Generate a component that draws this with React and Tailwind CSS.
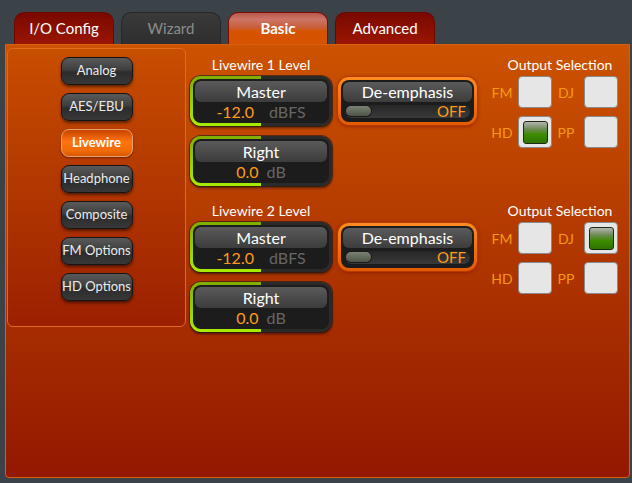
const sideItems = ["Analog", "AES/EBU", "Livewire", "Headphone", "Composite", "FM Options", "HD Options"];

function Tab({ label, kind }) {
  const styles = {
    red: "border-[#6a0800] bg-[linear-gradient(#7a0900,#9a1600)] text-white",
    gray: "border-[#262626] bg-[linear-gradient(#3a3a3a,#2e2e2e)] text-[#8c8c8c]",
    active:
      "border-[#7a0c00] bg-[linear-gradient(#b8584c,#cc7466_20%,#c8603e_45%,#d65400_60%,#d45200)] font-bold text-white",
  };
  return (
    <div
      className={`flex h-[32px] w-[100px] items-center justify-center rounded-t-[10px] border-x border-t text-[15px] ${styles[kind]}`}
    >
      {label}
    </div>
  );
}

function SideButton({ label }) {
  const active = label === "Livewire";
  return (
    <div
      className={
        active
          ? "flex h-[28px] w-[72px] items-center justify-center whitespace-nowrap rounded-[8px] border border-[#e8a070] bg-[linear-gradient(#c84400,#ff7410_45%,#f06a08_80%,#d85800)] text-[13px] font-bold text-white shadow-[0_1px_2px_rgba(0,0,0,0.4)]"
          : "flex h-[28px] w-[72px] items-center justify-center whitespace-nowrap rounded-[8px] border-[1.5px] border-[#151515] bg-[linear-gradient(#5a5a5a,#3e3e3e_45%,#2c2c2c_55%,#383838)] text-[13px] text-[#ececec] shadow-[0_2px_3px_rgba(0,0,0,0.5)]"
      }
    >
      {label}
    </div>
  );
}

function LevelBox({ name, value, unit, gap }) {
  return (
    <div className="h-[50px] w-[142px] rounded-[11px] bg-[linear-gradient(to_right,transparent_50%,#2a2a2a_50%),linear-gradient(#7fae00,#a8ec00)] p-[3px] shadow-[0_2px_3px_rgba(0,0,0,0.55)] ring-1 ring-[#1a1a1a]/60">
      <div className="flex h-full flex-col rounded-[8px] bg-[#1c1c1c] p-[2px]">
        <div className="flex h-[21px] items-center justify-center rounded-[6px] bg-[linear-gradient(#5a5a5a,#3c3c3c)] text-[16px] leading-none text-white">
          {name}
        </div>
        <div className={`flex flex-1 items-center justify-center text-[16px] leading-none ${gap}`}>
          <span className="text-[#ff9a1e]">{value}</span>
          <span className="text-[#666666]">{unit}</span>
        </div>
      </div>
    </div>
  );
}

function Deemphasis() {
  return (
    <div className="mt-px h-[48px] w-[139px] rounded-[11px] bg-[linear-gradient(#ff8c20,#e45a00)] p-[3px] shadow-[0_1px_4px_rgba(120,20,0,0.8)] ring-1 ring-[#b83a00]">
      <div className="flex h-full flex-col rounded-[8px] bg-[#1c1c1c] p-[2px]">
        <div className="flex h-[20px] items-center justify-center rounded-[6px] bg-[linear-gradient(#5a5a5a,#3c3c3c)] text-[16px] leading-none text-white">
          De-emphasis
        </div>
        <div className="flex flex-1 items-center px-[2px]">
          <div className="flex h-[13px] w-full items-center justify-between rounded-full bg-[linear-gradient(#262626,#3a3a3a)] pl-[1px] pr-[4px]">
            <div className="h-[10px] w-[25px] rounded-full bg-[linear-gradient(#7a8274,#4c5447)] ring-1 ring-[#1a1a1a]" />
            <span className="text-[15px] leading-none text-[#ff9a1e]">OFF</span>
          </div>
        </div>
      </div>
    </div>
  );
}

function Check({ on }) {
  return (
    <div className="flex h-[32px] w-[34px] items-center justify-center rounded-[4px] border border-[#8a8a8a] bg-[#e6e6e6]">
      {on && (
        <div className="h-[23px] w-[25px] rounded-[3px] border border-[#1e2a10] bg-[linear-gradient(#b4b4b4,#6a8a50_35%,#3e8c00_60%,#2f7400)]" />
      )}
    </div>
  );
}

function Output({ checked }) {
  return (
    <div className="ml-[13px] w-[130px]">
      <div className="h-[20px] pl-[10px] text-center text-[14px] leading-[18px] text-white">Output Selection</div>
      <div className="grid grid-cols-[24px_34px_24px_34px] items-center gap-x-[4px] gap-y-[8px] text-[14px] text-[#f39a10]">
        <span className="text-center">FM</span>
        <Check on={checked === "FM"} />
        <span className="pr-[4px] text-center">DJ</span>
        <Check on={checked === "DJ"} />
        <span className="text-center">HD</span>
        <Check on={checked === "HD"} />
        <span className="pr-[4px] text-center">PP</span>
        <Check on={checked === "PP"} />
      </div>
    </div>
  );
}

function Group({ n, checked }) {
  return (
    <div className="flex">
      <div className="w-[142px]">
        <div className="h-[20px] text-center text-[14px] leading-[18px] text-white">Livewire {n} Level</div>
        <LevelBox name="Master" value="-12.0" unit="dBFS" gap="gap-[15px]" />
        <div className="mt-[10px]">
          <LevelBox name="Right" value="0.0" unit="dB" gap="gap-[8px]" />
        </div>
      </div>
      <div className="ml-[6px] pt-[20px]">
        <Deemphasis />
      </div>
      <Output checked={checked} />
    </div>
  );
}

export default function App() {
  return (
    <div className="h-[483px] w-[632px] overflow-hidden bg-[#3c4348] font-[Lato,sans-serif]">
      <div className="flex gap-[7px] pl-[14px] pt-[12px]">
        <Tab label="I/O Config" kind="red" />
        <Tab label="Wizard" kind="gray" />
        <Tab label="Basic" kind="active" />
        <Tab label="Advanced" kind="red" />
      </div>
      <div className="ml-[5px] flex h-[434px] w-[625px] rounded-b-[4px] border border-[#d9600e] bg-[linear-gradient(#cc5300,#931800)] pl-px pt-[3px]">
        <div className="flex h-[279px] w-[179px] flex-col items-center gap-[8px] rounded-[6px] border border-[#e26a1e] bg-[linear-gradient(#c84e00,#9c2000)] pt-[8px]">
          {sideItems.map((s) => (
            <SideButton key={s} label={s} />
          ))}
        </div>
        <div className="ml-[4px] flex flex-col gap-[16px] pt-[8px]">
          <Group n={1} checked="HD" />
          <Group n={2} checked="DJ" />
        </div>
      </div>
    </div>
  );
}
